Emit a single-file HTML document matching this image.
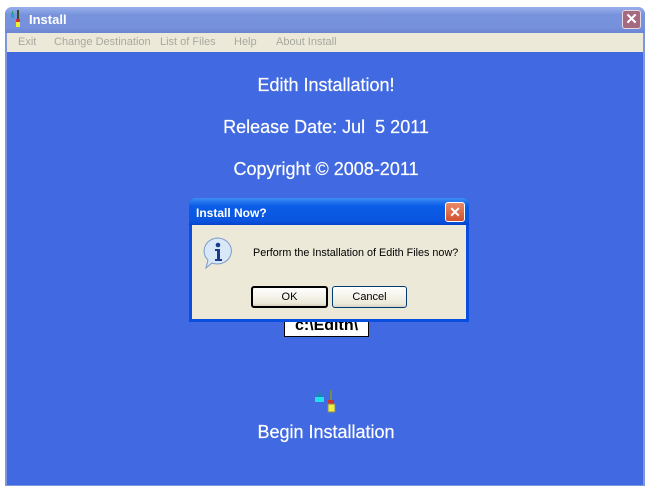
<!DOCTYPE html>
<html><head><style>
body{margin:0;width:650px;height:490px;background:#fff;position:relative;overflow:hidden;font-family:"Liberation Sans",sans-serif}
.abs{position:absolute}
.win{left:5px;top:7px;width:640px;height:479px;background:#7d97dc;border-radius:7px 7px 0 0}
.title{left:5px;top:7px;width:640px;height:26px;border-radius:7px 7px 0 0;background:linear-gradient(#9ab0ea,#7893dd 30%,#7690dc 80%,#6c85d3)}
.menu{left:7px;top:33px;width:636px;height:19px;background:#ece9d8;font-size:11px;color:#a8a8a0}
.menu span{position:absolute;top:3px}
.content{left:7px;top:52px;width:636px;height:433px;background:#4169e1}
.t{color:#fff;font-size:18px;width:652px;left:0;text-align:center;-webkit-text-stroke:0.2px #fff}
.dlg{left:189px;top:198px;width:280px;height:124px;background:#0a4ee0;border-radius:6px 6px 0 0}
.dtitle{left:189px;top:198px;width:280px;height:27px;border-radius:6px 6px 0 0;background:linear-gradient(#3d8cf5,#0b5ce6 30%,#0a55e0 85%,#0843c8)}
.dbody{left:192px;top:225px;width:274px;height:94px;background:#ece9d8}
.btn{height:20px;border:1px solid #003c74;border-radius:3px;background:linear-gradient(#fff,#ece9d8 85%,#d6d0c0);font-size:11px;text-align:center;line-height:20px;color:#000}
</style></head><body>
<div class="abs win"></div>
<div class="abs title"></div>
<svg class="abs" style="left:10px;top:10px" width="14" height="18"><rect x="1" y="3" width="3" height="5" fill="#2a9dd8"/><rect x="2" y="1" width="1" height="3" fill="#1a6"/><rect x="7" y="0" width="2" height="10" fill="#3a4a2a"/><rect x="6" y="9" width="4" height="3" fill="#c33"/><rect x="6" y="12" width="4" height="5" fill="#ee3"/></svg>
<div class="abs" style="left:29px;top:12px;color:#fff;font-weight:bold;font-size:13px">Install</div>
<div class="abs" style="left:622px;top:10px;width:19px;height:19px;border-radius:3px;background:#a46a80;border:1px solid #e8d8e0;box-sizing:border-box;color:#fff;font-size:15px;line-height:17px;text-align:center;font-weight:bold">✕</div>
<div class="abs menu"><span style="left:11px">Exit</span><span style="left:47px">Change Destination</span><span style="left:153px">List of Files</span><span style="left:227px">Help</span><span style="left:269px">About Install</span></div>
<div class="abs content"></div>
<div class="abs t" style="top:75px">Edith Installation!</div>
<div class="abs t" style="top:117px">Release Date: Jul&nbsp; 5 2011</div>
<div class="abs t" style="top:159px">Copyright © 2008-2011</div>
<div class="abs" style="left:284px;top:318px;width:85px;height:19px;background:#fff;border:1px solid #000;box-sizing:border-box;font-size:16px;font-weight:bold;text-align:center;line-height:14px;overflow:hidden">c:\Edith\</div>
<div class="abs dlg"></div>
<div class="abs dtitle"></div>
<div class="abs" style="left:196px;top:206px;color:#fff;font-weight:bold;font-size:12px">Install Now?</div>
<div class="abs" style="left:445px;top:202px;width:20px;height:20px;border-radius:3px;background:linear-gradient(#e98a6a,#d2502c);border:1px solid #fff;box-sizing:border-box;color:#fff;font-size:14px;line-height:18px;text-align:center;font-weight:bold">✕</div>
<div class="abs dbody"></div>
<svg class="abs" style="left:202px;top:236px" width="34" height="34"><path d="M16 2a14 13 0 1 1-6 25l-6 5 2-8A14 13 0 0 1 16 2z" fill="#d8e8f8" stroke="#7a9cc8"/><circle cx="16" cy="9" r="2.3" fill="#1a3a8a"/><path d="M13 13h5v10h2v2h-7v-2h2v-8h-2z" fill="#1a3a8a"/></svg>
<div class="abs" style="left:253px;top:247px;font-size:10.8px">Perform the Installation of Edith Files now?</div>
<div class="abs btn" style="left:251px;top:286px;width:73px;border-width:2px;border-color:#000;height:18px;line-height:18px">OK</div>
<div class="abs btn" style="left:332px;top:286px;width:73px">Cancel</div>
<svg class="abs" style="left:314px;top:390px" width="26" height="30"><rect x="1" y="7" width="9" height="5" fill="#1ee0f0"/><rect x="3" y="3" width="5" height="4" fill="#1a8aa0"/><rect x="16" y="0" width="2" height="12" fill="#7a8a4a"/><rect x="14" y="10" width="6" height="4" fill="#c33"/><rect x="14" y="14" width="7" height="8" fill="#ee4" stroke="#886" stroke-width="1"/></svg>
<div class="abs t" style="top:422px">Begin Installation</div>
</body></html>
